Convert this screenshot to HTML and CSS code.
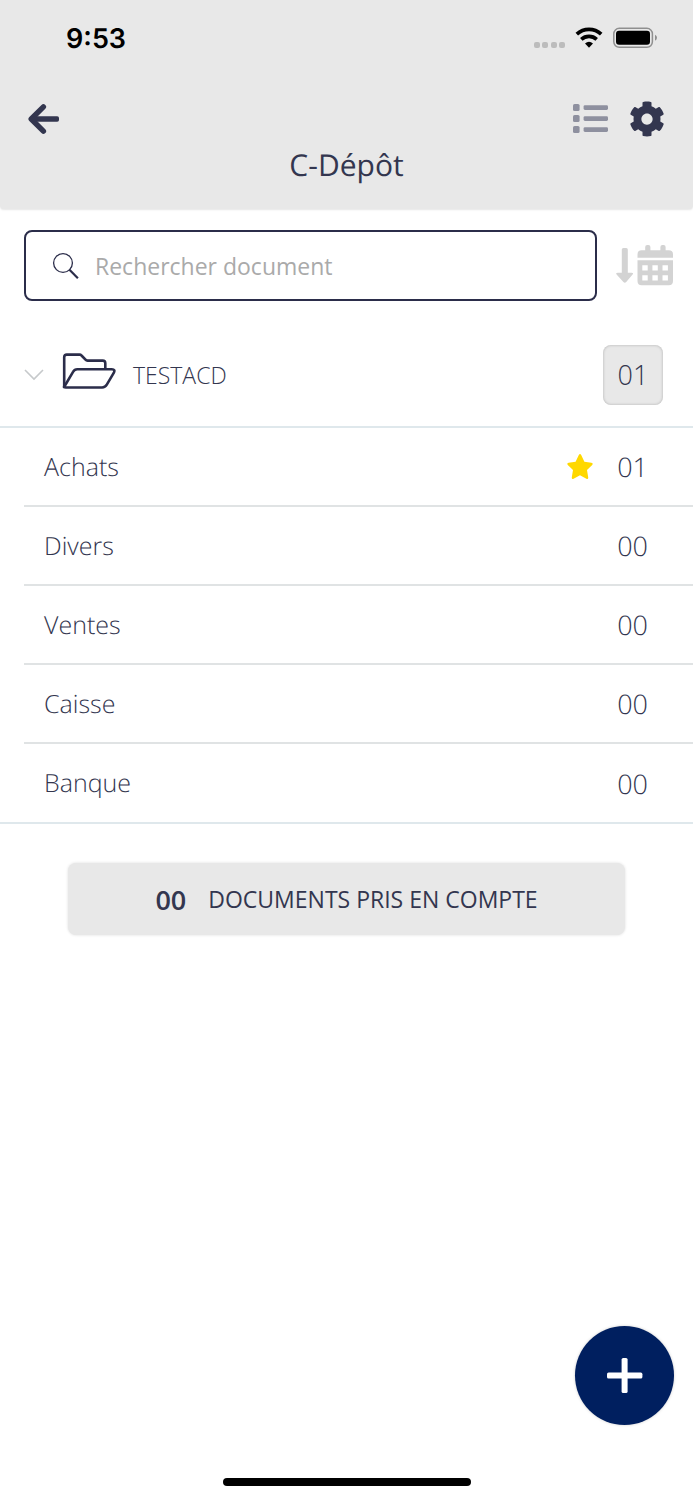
FILE: index.html
```html
<!DOCTYPE html>
<html lang="fr">
<head>
<meta charset="utf-8">
<meta name="viewport" content="width=device-width, initial-scale=1">
<title>C-Dépôt</title>
<link rel="stylesheet" href="styles.css">
</head>
<body>
<div class="app">
  <header class="header">
    <div class="status">
      <span class="clock">9:53</span>
      <svg class="status-icons" width="124" height="24" viewBox="0 0 124 24" aria-hidden="true">
        <g fill="#bcbcbc">
          <rect x="1" y="16" width="6" height="6" rx="2"/><rect x="9" y="16" width="6" height="6" rx="2"/><rect x="18" y="16" width="6" height="6" rx="2"/><rect x="26" y="16" width="6" height="6" rx="2"/>
        </g>
        <g fill="none" stroke="#000" stroke-width="3.7">
          <path d="M43.8 8.2a18 18 0 0 1 24.4 0"/>
          <path d="M48.3 13.4a11.4 11.4 0 0 1 15.400 0"/>
        </g>
        <path d="M56 21.800l-4-4.300q4-3.600 8 0z"/>
        <rect x="80.8" y="2.3" width="38.6" height="19" rx="5.5" fill="none" stroke="#8f8f8f" stroke-width="1.5"/>
        <rect x="83" y="4.8" width="34" height="14" rx="3"/>
        <path d="M122 8.8q2 .8 2 3t-2 3z" fill="#8f8f8f"/>
      </svg>
    </div>
    <nav class="toolbar">
      <button class="icon-button" aria-label="Retour">
        <svg width="32" height="32" viewBox="0 0 32 32" fill="none" stroke="#33364f" stroke-width="5.4" stroke-linecap="round" stroke-linejoin="round"><path d="M15.400 3.800L3.200 16l12.200 12.200"/><path d="M4 13.300h25.200q1.800 0 1.800 1.800v1.800q0 1.800-1.800 1.800H4z" fill="#33364f" stroke="none"/></svg>
      </button>
      <div class="tools">
        <button class="icon-button" aria-label="Affichage en liste">
          <svg width="36" height="30" viewBox="0 0 36 30" fill="#8e909f"><rect x="1" y="0" width="6.600" height="7" rx="1.6"/><rect x="1" y="11" width="6.600" height="7" rx="1.6"/><rect x="1" y="22" width="6.600" height="7" rx="1.6"/><rect x="11.600" y="1.2" width="24.400" height="4.8" rx="1.4"/><rect x="11.600" y="12.2" width="24.400" height="4.8" rx="1.4"/><rect x="11.600" y="23.2" width="24.400" height="4.8" rx="1.4"/></svg>
        </button>
        <button class="icon-button" aria-label="Paramètres">
          <svg width="36" height="36" viewBox="0 0 512 512" fill="#33364f"><path d="M487.4 315.7l-42.6-24.6c4.3-23.2 4.3-47 0-70.2l42.6-24.6c4.9-2.8 7.1-8.6 5.5-14-11.1-35.6-30-67.8-54.7-94.6-3.8-4.1-10-5.1-14.8-2.3L380.8 110c-17.9-15.4-38.5-27.3-60.8-35.1V25.8c0-5.6-3.9-10.5-9.4-11.7-36.7-8.2-74.3-7.8-109.2 0-5.5 1.2-9.4 6.1-9.4 11.7V75c-22.2 7.9-42.8 19.8-60.8 35.1L88.7 85.5c-4.9-2.8-11-1.9-14.8 2.3-24.7 26.7-43.6 58.9-54.7 94.6-1.7 5.4.6 11.2 5.5 14L67.3 221c-4.3 23.2-4.3 47 0 70.2l-42.6 24.6c-4.9 2.8-7.1 8.6-5.5 14 11.1 35.6 30 67.8 54.7 94.6 3.8 4.1 10 5.1 14.8 2.3l42.6-24.6c17.9 15.4 38.5 27.3 60.8 35.1v49.2c0 5.6 3.9 10.5 9.4 11.7 36.7 8.2 74.3 7.8 109.2 0 5.5-1.2 9.4-6.1 9.4-11.7v-49.2c22.2-7.9 42.8-19.8 60.8-35.1l42.6 24.6c4.9 2.8 11 1.9 14.8-2.3 24.7-26.7 43.6-58.9 54.7-94.6 1.5-5.5-.7-11.3-5.6-14.1zM256 336c-44.1 0-80-35.9-80-80s35.9-80 80-80 80 35.9 80 80-35.9 80-80 80z"/></svg>
        </button>
      </div>
    </nav>
    <h1 class="title">C-Dépôt</h1>
  </header>

  <main class="content">
    <div class="search-row">
      <label class="search">
        <svg width="28" height="28" viewBox="0 0 28 28" fill="none" stroke="#2b2d4a" aria-hidden="true"><circle cx="11" cy="11" r="9.4" stroke-width="1.3"/><path d="M17.5 17.8l8.4 8.4" stroke-width="2.2"/></svg>
        <input class="search-input" type="search" placeholder="Rechercher document" aria-label="Rechercher document">
      </label>
      <button class="icon-button" aria-label="Trier par date">
        <svg width="57" height="41" viewBox="0 0 57 41" fill="#d3d3d3"><path d="M5.8 4.6q0-1.600 1.600-1.600h2.800q1.600 0 1.600 1.600v23.200h3.600q2.800 0 1 2l-6.200 7.300q-1.400 1.500-2.800 0l-6.600-7.300q-1.700-2 1-2h4z"/><path d="M21.500 12.700V9.500q0-4.200 4.200-4.200h3.500V2q0-2 2-2h1.200q2 0 2 2v3.300h10V2q0-2 2-2h1.200q2 0 2 2v3.300h3.200q4.200 0 4.200 4.200v3.200z"/><path fill-rule="evenodd" d="M21.500 15.300H57V36q0 4.200-4.200 4.200H25.700q-4.200 0-4.200-4.200zM26.300 20.300h5.400v5.200h-5.400zM36.400 20.300h5.400v5.200h-5.400zM46.500 20.300h5.400v5.200h-5.400zM26.300 30.300h5.400v5.200h-5.400zM36.400 30.300h5.400v5.200h-5.400zM46.500 30.300h5.400v5.200h-5.400z"/></svg>
      </button>
    </div>

    <section class="group">
      <button class="folder" aria-expanded="true">
        <svg width="20" height="12" viewBox="0 0 20 12" fill="none" stroke="#c6c9cb" stroke-width="1.6" aria-hidden="true"><path d="M1 1l9 9 9-9"/></svg>
        <svg class="folder-icon" width="54" height="38" viewBox="0 0 54 38" fill="none" stroke="#2b2d4a" stroke-width="2.6" stroke-linejoin="round" aria-hidden="true"><path d="M2.200 34V4.200q0-2.600 2.600-2.600h12.700q1.200 0 2 .9l4 4.200q.8.900 2 .9h15.200q2.600 0 2.600 2.600v5.800"/><path d="M2.400 33.500L11.200 18.700q1.300-2.500 4.100-2.500h34.600q3.600 0 2 3.500l-7.100 12q-1.600 2.800-4.700 2.800H3.800q-2.700 0-1.400-1z"/></svg>
        <span class="folder-name">TESTACD</span>
        <span class="badge">01</span>
      </button>
      <ul class="list">
        <li class="item"><span class="name">Achats</span><svg width="26" height="26" viewBox="0 0 26 26" fill="#ffd800" role="img" aria-label="Favori"><path d="M11.8 1.100q1.200-2 2.400 0l3.200 6.600 7 1q2.200.5.8 2.200l-5.200 5.100 1.200 7.300q.2 2.200-1.800 1.400L13 21.300l-6.400 3.400q-2 .8-1.800-1.400L6 16 .8 10.900q-1.400-1.700.8-2.200l7-1z"/></svg><span class="count">01</span></li>
        <li class="item"><span class="name">Divers</span><span class="count">00</span></li>
        <li class="item"><span class="name">Ventes</span><span class="count">00</span></li>
        <li class="item"><span class="name">Caisse</span><span class="count">00</span></li>
        <li class="item"><span class="name">Banque</span><span class="count">00</span></li>
      </ul>
    </section>

    <button class="summary"><strong class="total">00</strong><span>DOCUMENTS PRIS EN COMPTE</span></button>
  </main>

  <footer class="footer">
    <button class="add" aria-label="Ajouter">
      <svg width="36" height="36" viewBox="0 0 36 36" fill="#fff"><rect x="14.600" y="0" width="6" height="35" rx="1.600"/><rect x="0" y="14.600" width="35.400" height="6" rx="1.600"/></svg>
    </button>
    <div class="home-bar"></div>
  </footer>
</div>
</body>
</html>
```
FILE: styles.css
```css
* { box-sizing: border-box; }

body {
  margin: 0;
  background: #fff;
  color: #33364f;
  font-family: "Open Sans", "Noto Sans", sans-serif;
  text-rendering: geometricPrecision;
}

button {
  margin: 0;
  padding: 0;
  border: 0;
  background: none;
  color: inherit;
  font: inherit;
}

svg { display: block; flex: none; }

.app {
  display: flex;
  flex-direction: column;
  min-height: 100vh;
}

.header {
  padding-bottom: 23px;
  background: #e8e8e8;
  border-radius: 0 0 4px 4px;
  box-shadow: 0 1px 2px rgba(0, 0, 0, 0.1);
}

.status {
  display: flex;
  align-items: center;
  justify-content: space-between;
  height: 76px;
  padding: 0 36px 0 66px;
}

.clock {
  padding-top: 2px;
  color: #000;
  font: 600 27px/32px Inter, sans-serif;
}

.toolbar {
  display: flex;
  align-items: center;
  justify-content: space-between;
  height: 68px;
  padding: 18px 28px 0;
}

.tools {
  display: flex;
  align-items: center;
  gap: 21px;
}

.title {
  margin: 0;
  font-size: 30px;
  font-weight: 400;
  line-height: 42px;
  text-align: center;
}

.content { padding-top: 21px; }

.search-row {
  display: flex;
  align-items: center;
  gap: 19px;
  padding: 0 20px 0 24px;
}

.search {
  display: flex;
  flex: 1;
  align-items: center;
  gap: 15px;
  height: 71px;
  padding: 0 26px;
  border: 2px solid #2b2d4a;
  border-radius: 8px;
}

.search-input {
  flex: 1;
  min-width: 0;
  padding: 0;
  border: 0;
  outline: 0;
  background: none;
  color: #33364f;
  font: inherit;
  font-size: 23px;
  line-height: 34px;
}

.search-input::placeholder { color: #aaa; opacity: 1; }

.group { padding-top: 22px; }

.folder {
  display: flex;
  align-items: center;
  width: 100%;
  height: 105px;
  padding: 0 30px 0 24px;
  border-bottom: 2px solid #dfe8ec;
  text-align: left;
}

.folder-icon {
  margin-bottom: 6px;
  margin-left: 18px;
}

.folder-name {
  flex: 1;
  margin-left: 17px;
  font-size: 23px;
  font-weight: 300;
}

.badge {
  width: 60px;
  border-radius: 8px;
  background: #e8e8e8;
  box-shadow: inset 0 0 3px rgba(0, 0, 0, 0.25);
  font-size: 27px;
  font-weight: 300;
  line-height: 60px;
  text-align: center;
}

.list {
  margin: 0;
  padding: 0 0 0 24px;
  border-bottom: 2px solid #dfe8ec;
  list-style: none;
}

.item {
  display: flex;
  align-items: center;
  gap: 24px;
  height: 79px;
  padding: 0 45px 0 20px;
  border-bottom: 2px solid #e0e3e4;
  font-weight: 300;
}

.item:last-child { height: 78px; border-bottom: 0; }

.name { flex: 1; font-size: 25px; }

.count { font-size: 27px; }

.summary {
  display: flex;
  align-items: center;
  justify-content: center;
  gap: 22px;
  width: calc(100% - 136px);
  height: 72px;
  margin: 39px auto 0;
  border-radius: 8px;
  background: #e8e8e8;
  box-shadow: 0 0 3px rgba(0, 0, 0, 0.14);
  font-size: 23px;
}

.total { font-size: 27px; font-weight: 600; }

.footer {
  display: flex;
  flex-direction: column;
  align-items: center;
  gap: 53px;
  margin-top: auto;
  padding: 20px 19px 14px;
}

.add {
  display: grid;
  place-items: center;
  align-self: flex-end;
  width: 99px;
  height: 99px;
  border-radius: 50%;
  background: #001f5f;
  box-shadow: 0 0 3px rgba(0, 0, 0, 0.2);
}

.home-bar {
  width: 248px;
  height: 8px;
  border-radius: 4px;
  background: #000;
}
```
